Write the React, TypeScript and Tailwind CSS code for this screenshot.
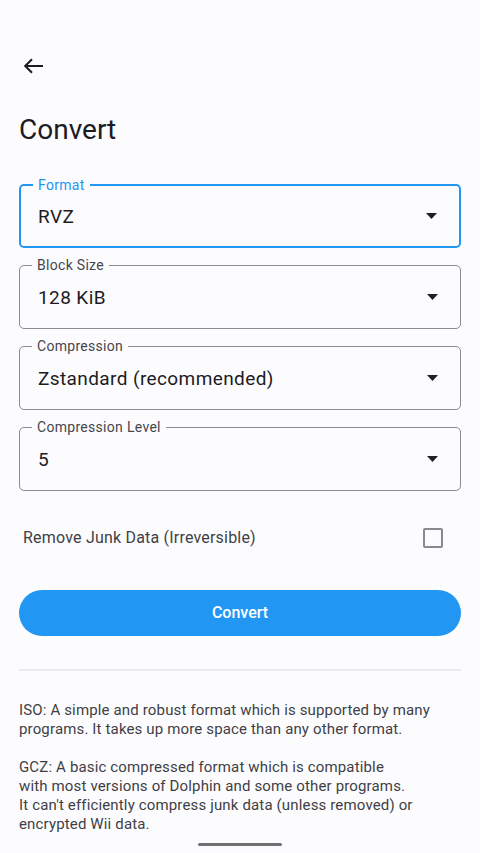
import React from 'react';

const FIELDS = [
  { label: 'Format', value: 'RVZ', focused: true },
  { label: 'Block Size', value: '128 KiB' },
  { label: 'Compression', value: 'Zstandard (recommended)' },
  { label: 'Compression Level', value: '5' },
];

const DropArrow = () => (
  <svg width="11" height="6" viewBox="0 0 11 6" className="shrink-0">
    <path d="M0 0h11L5.5 6z" fill="#1f1f24" />
  </svg>
);

const SelectField: React.FC<{ label: string; value: string; focused?: boolean }> = ({
  label,
  value,
  focused,
}) => (
  <div
    className={`relative h-[64px] rounded-[5px] flex items-center justify-between pr-[22px] ${
      focused ? 'border-2 border-[#2196f3] pl-[17px]' : 'border border-[#8b8b90] pl-[18px]'
    }`}
  >
    <span
      className={`absolute -top-[8px] left-[12px] px-[5px] bg-[#fcfcff] text-[14px] leading-[14px] tracking-[0.3px] ${
        focused ? 'text-[#2196f3]' : 'text-[#46464c]'
      }`}
    >
      {label}
    </span>
    <span className="text-[19px] tracking-[0.4px] text-[#1c1b1f] pt-[2px]">{value}</span>
    <DropArrow />
  </div>
);

export default function App() {
  return (
    <div
      className="min-h-[853px] bg-[#fcfcff] px-[19px] text-[#1c1b1f]"
      style={{ fontFamily: 'Roboto, "Noto Sans", sans-serif' }}
    >
      {/* header */}
      <div className="pt-[58px] pl-[4px]">
        <svg width="20" height="16" viewBox="0 0 20 16" fill="none">
          <path d="M20 8H2.5M9 1.2L2.2 8 9 14.8" stroke="#1c1b1f" strokeWidth="2" />
        </svg>
      </div>
      <h1 className="mt-[39px] text-[28px] leading-[34px] font-normal">Convert</h1>

      {/* fields */}
      <div className="mt-[37px] flex flex-col gap-[17px]">
        {FIELDS.map((f) => (
          <SelectField key={f.label} {...f} />
        ))}
      </div>

      {/* junk data toggle */}
      <div className="mt-[23px] h-[48px] flex items-center justify-between pl-[4px] pr-[18px]">
        <span className="text-[16px] tracking-[0.2px] text-[#3f3f45]">
          Remove Junk Data (Irreversible)
        </span>
        <div className="w-[20px] h-[20px] border-2 border-[#8a8a8e] rounded-[2px]" />
      </div>

      <button className="mt-[28px] w-full h-[46px] rounded-full bg-[#2196f3] text-white text-[16px] font-medium">
        Convert
      </button>

      <div className="mt-[33px] h-[2px] bg-[#ebebf0]" />

      {/* format descriptions */}
      <p className="mt-[30px] text-[15px] leading-[19px] tracking-[0.15px] text-[#3f3f45] whitespace-pre-line">
        {'ISO: A simple and robust format which is supported by many\nprograms. It takes up more space than any other format.\n\nGCZ: A basic compressed format which is compatible\nwith most versions of Dolphin and some other programs.\nIt can\'t efficiently compress junk data (unless removed) or\nencrypted Wii data.'}
      </p>

      <div className="mt-[9px] mx-auto w-[84px] h-[3px] rounded-full bg-[#707070]" />
    </div>
  );
}
